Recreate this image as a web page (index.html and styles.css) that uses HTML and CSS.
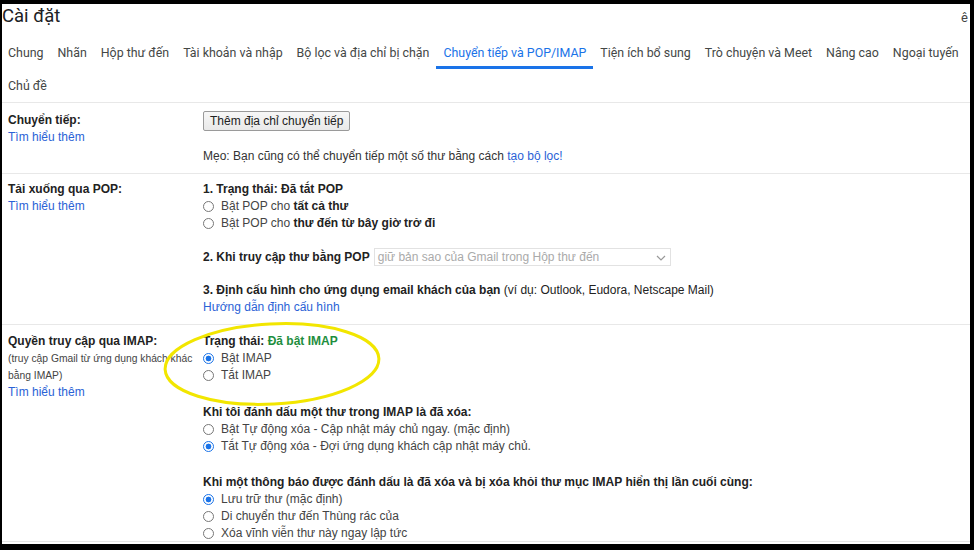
FILE: index.html
```html
<!DOCTYPE html>
<html lang="vi">
<head>
<meta charset="utf-8">
<title>Cài đặt</title>
<link rel="stylesheet" href="styles.css">
</head>
<body>
<div class="frame">
  <div class="content">
    <h1 class="title">Cài đặt</h1>
    <span class="corner">ê</span>
    <nav class="tabs">
      <span class="tab">Chung</span>
      <span class="tab">Nhãn</span>
      <span class="tab">Hộp thư đến</span>
      <span class="tab">Tài khoản và nhập</span>
      <span class="tab">Bộ lọc và địa chỉ bị chặn</span>
      <span class="tab active">Chuyển tiếp và POP/IMAP</span>
      <span class="tab">Tiện ích bổ sung</span>
      <span class="tab">Trò chuyện và Meet</span>
      <span class="tab">Nâng cao</span>
      <span class="tab">Ngoại tuyến</span>
      <span class="tab">Chủ đề</span>
    </nav>

    <section class="row row-fwd">
      <div class="label">
        <div class="label-title">Chuyển tiếp:</div>
        <a class="link">Tìm hiểu thêm</a>
      </div>
      <div class="body">
        <button class="btn">Thêm địa chỉ chuyển tiếp</button>
        <div class="tip">Mẹo: Bạn cũng có thể chuyển tiếp một số thư bằng cách <a class="link">tạo bộ lọc!</a></div>
      </div>
    </section>

    <section class="row row-pop">
      <div class="label">
        <div class="label-title">Tải xuống qua POP:</div>
        <a class="link">Tìm hiểu thêm</a>
      </div>
      <div class="body">
        <div class="line b">1. Trạng thái: Đã tắt POP</div>
        <div class="line opt"><span class="radio"></span>Bật POP cho&nbsp;<b>tất cả thư</b></div>
        <div class="line opt"><span class="radio"></span>Bật POP cho&nbsp;<b>thư đến từ bây giờ trở đi</b></div>
        <div class="selrow"><b>2. Khi truy cập thư bằng POP</b>
          <span class="select">giữ bản sao của Gmail trong Hộp thư đến
            <svg class="chev" width="10" height="6" viewBox="0 0 10 6"><polyline points="1,1 5,5 9,1" fill="none" stroke="#999" stroke-width="1.2"/></svg>
          </span>
        </div>
        <div class="line gap3"><b>3. Định cấu hình cho ứng dụng email khách của bạn</b> (ví dụ: Outlook, Eudora, Netscape Mail)</div>
        <div class="line"><a class="link">Hướng dẫn định cấu hình</a></div>
      </div>
    </section>

    <section class="row row-imap">
      <div class="label">
        <div class="label-title">Quyền truy cập qua IMAP:</div>
        <div class="small">(truy cập Gmail từ ứng dụng khách khác</div>
        <div class="small">bằng IMAP)</div>
        <a class="link">Tìm hiểu thêm</a>
      </div>
      <div class="body">
        <div class="line b">Trạng thái: <span class="green">Đã bật IMAP</span></div>
        <div class="line opt"><span class="radio on"></span>Bật IMAP</div>
        <div class="line opt"><span class="radio"></span>Tắt IMAP</div>
        <div class="line b gapA">Khi tôi đánh dấu một thư trong IMAP là đã xóa:</div>
        <div class="line opt"><span class="radio"></span>Bật Tự động xóa - Cập nhật máy chủ ngay. (mặc định)</div>
        <div class="line opt"><span class="radio on"></span>Tắt Tự động xóa - Đợi ứng dụng khách cập nhật máy chủ.</div>
        <div class="line b gapB">Khi một thông báo được đánh dấu là đã xóa và bị xóa khỏi thư mục IMAP hiển thị lần cuối cùng:</div>
        <div class="line opt"><span class="radio on"></span>Lưu trữ thư (mặc định)</div>
        <div class="line opt"><span class="radio"></span>Di chuyển thư đến Thùng rác của</div>
        <div class="line opt"><span class="radio"></span>Xóa vĩnh viễn thư này ngay lập tức</div>
      </div>
    </section>

    <svg class="highlight" width="240" height="100" viewBox="0 0 240 100">
      <ellipse cx="120" cy="50" rx="107" ry="40" fill="none" stroke="#f2e600" stroke-width="3" transform="rotate(-3 120 50)"/>
    </svg>
  </div>
</div>
</body>
</html>
```

FILE: styles.css
```css
html, body {
  margin: 0;
  padding: 0;
  background: #000;
}
body {
  width: 974px;
  height: 550px;
  overflow: hidden;
}
.frame {
  margin: 4px 4px 6px 2px;
  width: 968px;
  height: 540px;
  background: #fff;
  overflow: hidden;
}
.content {
  position: relative;
  height: 537px;
  overflow: hidden;
  border-bottom: 1px solid #e6e6e6;
  font-family: "Liberation Sans", Arial, sans-serif;
  font-size: 12px;
  color: #222;
}
.title {
  margin: 0;
  font-family: Roboto, "Liberation Sans", sans-serif;
  font-weight: 400;
  font-size: 18.5px;
  line-height: 24px;
  color: #202124;
}
.corner {
  position: absolute;
  right: 2px;
  top: 6px;
  font-family: Roboto, sans-serif;
  font-size: 13px;
  color: #444;
}
.tabs {
  display: flex;
  flex-wrap: wrap;
  margin: 8px 0 0 -1px;
  font-family: Roboto, "Liberation Sans", sans-serif;
  font-size: 12.4px;
  color: #444746;
}
.tab {
  padding: 8px 7px 5px;
  line-height: 17px;
  border-bottom: 3px solid transparent;
  white-space: nowrap;
}
.tab.active {
  color: #1a73e8;
  border-bottom-color: #1a73e8;
}
.row {
  display: grid;
  grid-template-columns: 195px 1fr;
  border-top: 1px solid #e8e8e8;
  padding: 7px 0 8px 6px;
  line-height: 17px;
}
.label-title {
  font-weight: bold;
}
.link {
  color: #2a62d6;
  text-decoration: none;
  display: block;
}
.tip .link { display: inline; }
.small {
  font-size: 10.3px;
  color: #444;
  white-space: nowrap;
}
.btn {
  display: block;
  height: 20px;
  margin: 0;
  padding: 0 6px;
  font-family: "Liberation Sans", Arial, sans-serif;
  font-size: 12px;
  color: #222;
  background: linear-gradient(#f7f7f7, #e9e9e9);
  border: 1px solid #9a9a9a;
  border-radius: 2px;
}
.row-fwd { padding-top: 8px; padding-bottom: 8px; }
.row-fwd .label { padding-top: 1px; }
.tip {
  margin-top: 17px;
  color: #333;
}
.line { height: 17px; white-space: nowrap; }
.b { font-weight: bold; }
.opt {
  display: flex;
  align-items: center;
  color: #444;
}
.opt b { color: #222; }
.radio {
  box-sizing: border-box;
  width: 11px;
  height: 11px;
  border: 1px solid #777;
  border-radius: 50%;
  margin-right: 7px;
  background: #fff;
  flex: none;
}
.radio.on {
  border-color: #1a73e8;
  background: radial-gradient(circle, #1a73e8 0 2.6px, #fff 3.2px);
}
.selrow {
  display: flex;
  align-items: center;
  height: 18px;
  margin-top: 16px;
  white-space: nowrap;
}
.select {
  box-sizing: border-box;
  position: relative;
  width: 297px;
  height: 18px;
  margin-left: 4px;
  padding-left: 3px;
  border: 1px solid #e2e2e2;
  color: #aaa;
  line-height: 16px;
  font-size: 12px;
}
.chev {
  position: absolute;
  right: 4px;
  top: 6px;
}
.gap3 { margin-top: 16px; }
.row-pop { padding-bottom: 8px; }
.row-imap { padding-top: 8px; }
.green { color: #1e8e3e; }
.gapA { margin-top: 20px; }
.gapB { margin-top: 19px; }
.highlight {
  position: absolute;
  left: 150px;
  top: 310px;
}
```
